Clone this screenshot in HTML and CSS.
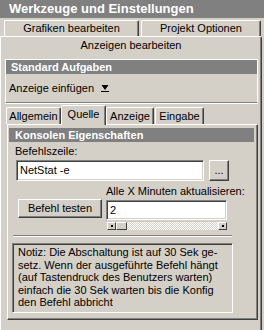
FILE: index.html
```html
<!DOCTYPE html>
<html lang="de">
<head>
    <meta charset="UTF-8">
    <title>Werkzeuge und Einstellungen</title>
    <link rel="stylesheet" href="styles.css">
</head>
<body>
    <div class="titlebar">Werkzeuge und Einstellungen</div>

    <!-- Obere Reiter -->
    <div class="tabrow back">
        <div class="tab tab-grafiken">Grafiken bearbeiten</div>
        <div class="tab tab-projekt">Projekt Optionen</div>
    </div>
    <div class="tabrow front">
        <div class="tab tab-anzeigen">Anzeigen bearbeiten</div>
    </div>

    <div class="panel-outer">
        <div class="group">
            <div class="group-head">Standard Aufgaben</div>
            <div class="group-body">
                Anzeige einfügen
                <svg class="drop-icon" width="8" height="9" viewBox="0 0 8 9">
                    <polygon points="0.5,1 7.5,1 4,6" fill="#000"/>
                    <rect x="0" y="7" width="8" height="1" fill="#000"/>
                </svg>
            </div>
        </div>

        <!-- Untere Reiter -->
        <div class="subtabs">
            <div class="tab sub-allgemein">Allgemein</div>
            <div class="tab sub-quelle selected">Quelle</div>
            <div class="tab sub-anzeige">Anzeige</div>
            <div class="tab sub-eingabe">Eingabe</div>
        </div>

        <div class="panel-inner">
            <div class="group-head">Konsolen Eigenschaften</div>
            <div class="label cmd-label">Befehlszeile:</div>
            <div class="cmd-row">
                <div class="textbox cmd-input">NetStat -e</div>
                <div class="btn btn-dots">...</div>
            </div>

            <div class="test-grid">
                <div class="label interval-label">Alle X Minuten aktualisieren:</div>
                <div class="btn btn-test">Befehl testen</div>
                <div class="textbox interval-input">2</div>
                <div class="scrollbar">
                    <div class="sb-btn"><span class="sb-dot"></span></div>
                    <div class="sb-thumb"></div>
                    <div class="sb-track"></div>
                    <div class="sb-btn"><span class="sb-dot"></span></div>
                </div>
            </div>

            <div class="separator"></div>

            <div class="note">
                Notiz: Die Abschaltung ist auf 30 Sek ge-<br>
                setz. Wenn der ausgeführte Befehl hängt<br>
                (auf Tastendruck des Benutzers warten)<br>
                einfach die 30 Sek warten bis die Konfig<br>
                den Befehl abbricht
            </div>
        </div>
    </div>
</body>
</html>
```

FILE: styles.css
```css
* {
    box-sizing: border-box;
}

body {
    margin: 0;
    width: 264px;
    height: 330px;
    overflow: hidden;
    background: #d4d0c8;
    color: #000;
    font-family: "Liberation Sans", Arial, sans-serif;
    font-size: 11px;
}

.titlebar {
    height: 18px;
    background: #808080;
    color: #fff;
    font-weight: bold;
    font-size: 13px;
    line-height: 18px;
    padding-left: 9px;
    white-space: nowrap;
}

/* Reiter */
.tabrow {
    display: flex;
}

.tab {
    background: #d4d0c8;
    border: 1px solid #fff;
    border-right-color: #404040;
    border-bottom: none;
    border-radius: 2px 2px 0 0;
    box-shadow: inset -1px 0 #808080;
    text-align: center;
    white-space: nowrap;
}

.tabrow.back {
    height: 18px;
    padding: 2px 0 0 4px;
    gap: 2px;
}

.tabrow.back .tab {
    height: 16px;
    line-height: 15px;
}

.tab-grafiken {
    width: 135px;
}

.tab-projekt {
    width: 120px;
}

.tab-anzeigen {
    width: 262px;
    height: 19px;
    line-height: 17px;
}

.panel-outer {
    width: 262px;
    height: 275px;
    border-left: 1px solid #fff;
    border-right: 1px solid #404040;
    box-shadow: inset -1px 0 #808080;
    padding: 4px 0 0 4px;
}

.group {
    width: 253px;
    border: 1px solid #fff;
    border-bottom-color: #808080;
    box-shadow: 0 1px #fff;
}

.group-head {
    height: 14px;
    line-height: 14px;
    background: #808080;
    color: #fff;
    font-weight: bold;
    padding-left: 5px;
    white-space: nowrap;
}

.group-body {
    height: 28px;
    line-height: 28px;
    padding-left: 3px;
    display: flex;
    align-items: center;
    gap: 7px;
}

.drop-icon {
    margin-top: 1px;
}

.subtabs {
    display: flex;
    align-items: flex-end;
    height: 20px;
    margin-top: 1px;
    padding-left: 1px;
}

.subtabs .tab {
    height: 17px;
    line-height: 16px;
}

.subtabs .tab.selected {
    position: relative;
    z-index: 1;
    height: 20px;
    line-height: 16px;
    margin-bottom: -1px;
}

.sub-allgemein {
    width: 55px;
}

.sub-quelle {
    width: 45px;
}

.sub-anzeige {
    width: 48px;
}

.sub-eingabe {
    width: 49px;
    margin-left: 1px;
}

.panel-inner {
    width: 251px;
    height: 196px;
    margin-left: 2px;
    border: 1px solid #fff;
    border-right-color: #404040;
    border-bottom-color: #404040;
    box-shadow: inset -1px -1px #808080;
    padding: 3px 0 0 1px;
}

.panel-inner .group-head {
    width: 245px;
    padding-left: 6px;
}

.label {
    white-space: nowrap;
}

.cmd-label {
    height: 14px;
    line-height: 14px;
    margin: 2px 0 0 6px;
}

/* Eingabefelder und Knöpfe */
.textbox {
    background: #fff;
    border: 1px solid #808080;
    border-right-color: #fff;
    border-bottom-color: #fff;
    box-shadow: inset 1px 1px #404040, inset -1px -1px #d4d0c8;
    padding-left: 3px;
    white-space: nowrap;
}

.btn {
    background: #d4d0c8;
    border: 1px solid #fff;
    border-right-color: #404040;
    border-bottom-color: #404040;
    box-shadow: inset -1px -1px #808080;
    text-align: center;
    white-space: nowrap;
}

.cmd-row {
    display: flex;
    gap: 5px;
    margin: 2px 0 0 7px;
}

.cmd-input {
    width: 188px;
    height: 21px;
    line-height: 19px;
}

.btn-dots {
    width: 20px;
    height: 21px;
    line-height: 18px;
}

.test-grid {
    display: grid;
    grid-template-columns: 84px 121px;
    column-gap: 4px;
    margin: 4px 0 0 9px;
}

.interval-label {
    grid-column: 2;
    height: 14px;
    line-height: 13px;
}

.btn-test {
    grid-column: 1;
    height: 19px;
    line-height: 17px;
}

.interval-input {
    height: 20px;
    line-height: 18px;
    margin-top: 1px;
}

.scrollbar {
    grid-column: 2;
    display: flex;
    width: 120px;
    height: 8px;
    margin: 2px 0 0 1px;
}

.sb-btn,
.sb-thumb {
    background: #d4d0c8;
    border: 1px solid #fff;
    border-right-color: #404040;
    border-bottom-color: #404040;
    display: flex;
    align-items: center;
    justify-content: center;
}

.sb-btn {
    width: 9px;
}

.sb-thumb {
    width: 11px;
}

.sb-dot {
    width: 2px;
    height: 2px;
    background: #000;
}

.sb-track {
    flex: 1;
    background: repeating-conic-gradient(#fff 0 25%, #d4d0c8 0 50%) 0 0 / 2px 2px;
}

.separator {
    width: 219px;
    height: 2px;
    margin: 5px 0 0 4px;
    border-top: 1px solid #808080;
    border-bottom: 1px solid #fff;
}

.note {
    width: 221px;
    height: 70px;
    margin: 6px 0 0 3px;
    border: 1px solid #808080;
    border-right-color: #fff;
    border-bottom-color: #fff;
    box-shadow: inset 1px 1px #404040, inset -1px -1px #d4d0c8;
    padding: 2px 0 0 5px;
    line-height: 12.5px;
    white-space: nowrap;
}
```
